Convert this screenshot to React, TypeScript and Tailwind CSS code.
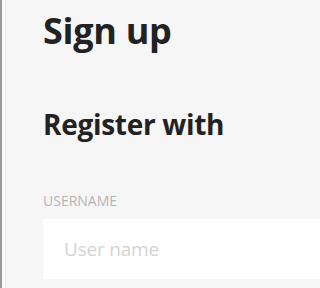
import React from "react";

export default function App() {
  return (
    <div className="w-full h-screen overflow-hidden bg-[#f6f6f6] flex" style={{ fontFamily: "'Open Sans', 'Noto Sans', sans-serif" }}>
      <div className="w-[2px] bg-[#9a9a9a] shrink-0" />
      <div className="w-[3px] bg-[#fbfbfb] shrink-0" />
      <div className="w-[1px] bg-[#e4e4e4] shrink-0" />
      <div className="flex-1 min-w-0 pl-[37px] pt-[7px] flex flex-col">
        <h1 className="text-[36px] leading-[48px] font-bold text-[#222222] tracking-[-0.3px]">Sign up</h1>
        <h2 className="mt-[51px] text-[28px] leading-[36px] font-bold text-[#222222] tracking-[-0.3px]">Register with</h2>
        <label className="mt-[51px] text-[14px] leading-[16px] text-[#b5b5b5] uppercase">Username</label>
        <div className="mt-[10px] h-[60px] bg-white flex items-center pl-[21px]">
          <span className="text-[19px] text-[#d4d4d4] tracking-[-0.2px]">User name</span>
        </div>
      </div>
    </div>
  );
}
